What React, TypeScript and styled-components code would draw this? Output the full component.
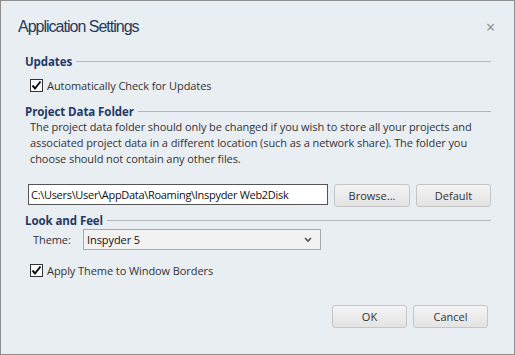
import React from 'react';
import styled, { createGlobalStyle } from 'styled-components';

const GlobalStyle = createGlobalStyle`
  html, body {
    margin: 0;
    padding: 0;
    background: #e9eef3;
  }
  body {
    font-family: "Open Sans", "Noto Sans", sans-serif;
    font-size: 11px;
    letter-spacing: -0.08px;
    color: #333;
  }
`;

const Window = styled.div`
  background: #e9eef3;
  border: 1px solid #8f8f8f;
  box-sizing: border-box;
  display: flex;
  flex-direction: column;
  height: 355px;
  width: 515px;
`;

const TitleBar = styled.div`
  align-items: center;
  display: flex;
  height: 51px;
  justify-content: space-between;
  padding: 0 19px 0 17px;
`;

const Title = styled.h1`
  color: #263a5a;
  font-family: "Liberation Sans", Arial, sans-serif;
  font-size: 16px;
  font-weight: 400;
  letter-spacing: -1px;
  margin: 0;
`;

const CloseButton = styled.span`
  color: #8a8a8a;
  font-size: 16px;
  line-height: 1;
`;

const Content = styled.div`
  display: flex;
  flex: 1;
  flex-direction: column;
  padding: 0 23px 0 24px;
`;

const SectionHeader = styled.div<{ $top?: number }>`
  align-items: center;
  display: flex;
  gap: 4px;
  height: 18px;
  margin-top: ${({ $top }) => $top ?? 0}px;
`;

const SectionTitle = styled.span`
  color: #1f3a63;
  font-size: 11.5px;
  font-weight: 700;
`;

const Rule = styled.span`
  border-top: 1px solid #b3b7bc;
  flex: 1;
`;

const CheckRow = styled.label<{ $top?: number }>`
  align-items: center;
  display: flex;
  gap: 4px;
  height: 20px;
  margin: ${({ $top }) => $top ?? 0}px 0 0 5px;
`;

const CheckBox = styled.span`
  align-items: center;
  background: #fff;
  border: 1px solid #333;
  box-sizing: border-box;
  display: inline-flex;
  height: 13px;
  justify-content: center;
  width: 13px;
`;

const Paragraph = styled.p`
  line-height: 16px;
  margin: -1px 0 0 5px;
  white-space: nowrap;
`;

const FolderRow = styled.div`
  align-items: flex-start;
  display: flex;
  gap: 6px;
  margin-top: 17px;
`;

const PathInput = styled.div`
  background: #fff;
  border: 1px solid #555;
  box-sizing: border-box;
  color: #111;
  height: 21px;
  letter-spacing: -0.3px;
  line-height: 19px;
  margin-left: 3px;
  padding-left: 2px;
  width: 300px;
`;

const Button = styled.button<{ $w?: number }>`
  background: linear-gradient(#f4f4f4, #e3e3e3);
  border: 1px solid #c6c6c6;
  border-radius: 3px;
  color: #333;
  font-family: inherit;
  font-size: 11px;
  height: 23px;
  padding: 0;
  width: ${({ $w }) => $w ?? 75}px;
`;

const ThemeRow = styled.div`
  align-items: center;
  display: flex;
  margin: 0 0 0 8px;
`;

const ThemeLabel = styled.span`
  width: 50px;
`;

const Select = styled.div`
  align-items: center;
  background: #f2f2f2;
  border: 1px solid #a9a9a9;
  box-sizing: border-box;
  color: #111;
  display: flex;
  height: 21px;
  justify-content: space-between;
  padding: 0 8px 0 3px;
  width: 238px;
`;

const Footer = styled.div`
  display: flex;
  gap: 6px;
  justify-content: flex-end;
  margin-top: 25px;
  padding-right: 3px;
`;

const Check = () => (
  <svg width="11" height="11" viewBox="0 0 11 11">
    <path d="M1.5 5.5 L4 8.5 L9.5 1.5" stroke="#111" strokeWidth="2" fill="none" />
  </svg>
);

const Chevron = () => (
  <svg width="8" height="6" viewBox="0 0 8 6">
    <path d="M1 1 L4 4 L7 1" stroke="#555" strokeWidth="1.6" fill="none" />
  </svg>
);

const App = () => (
  <Window>
    <GlobalStyle />
    <TitleBar>
      <Title>Application Settings</Title>
      <CloseButton>×</CloseButton>
    </TitleBar>
    <Content>
      <SectionHeader>
        <SectionTitle>Updates</SectionTitle>
        <Rule />
      </SectionHeader>
      <CheckRow $top={5}>
        <CheckBox><Check /></CheckBox>
        Automatically Check for Updates
      </CheckRow>
      <SectionHeader $top={7}>
        <SectionTitle>Project Data Folder</SectionTitle>
        <Rule />
      </SectionHeader>
      <Paragraph>
        The project data folder should only be changed if you wish to store all your projects and
        <br />
        associated project data in a different location (such as a network share). The folder you
        <br />
        choose should not contain any other files.
      </Paragraph>
      <FolderRow>
        <PathInput>C:\Users\User\AppData\Roaming\Inspyder Web2Disk</PathInput>
        <Button $w={76}>Browse...</Button>
        <Button $w={75}>Default</Button>
      </FolderRow>
      <SectionHeader $top={4}>
        <SectionTitle>Look and Feel</SectionTitle>
        <Rule />
      </SectionHeader>
      <ThemeRow>
        <ThemeLabel>Theme:</ThemeLabel>
        <Select>
          Inspyder 5
          <Chevron />
        </Select>
      </ThemeRow>
      <CheckRow $top={10}>
        <CheckBox><Check /></CheckBox>
        Apply Theme to Window Borders
      </CheckRow>
      <Footer>
        <Button $w={75}>OK</Button>
        <Button $w={75}>Cancel</Button>
      </Footer>
    </Content>
  </Window>
);

export default App;
